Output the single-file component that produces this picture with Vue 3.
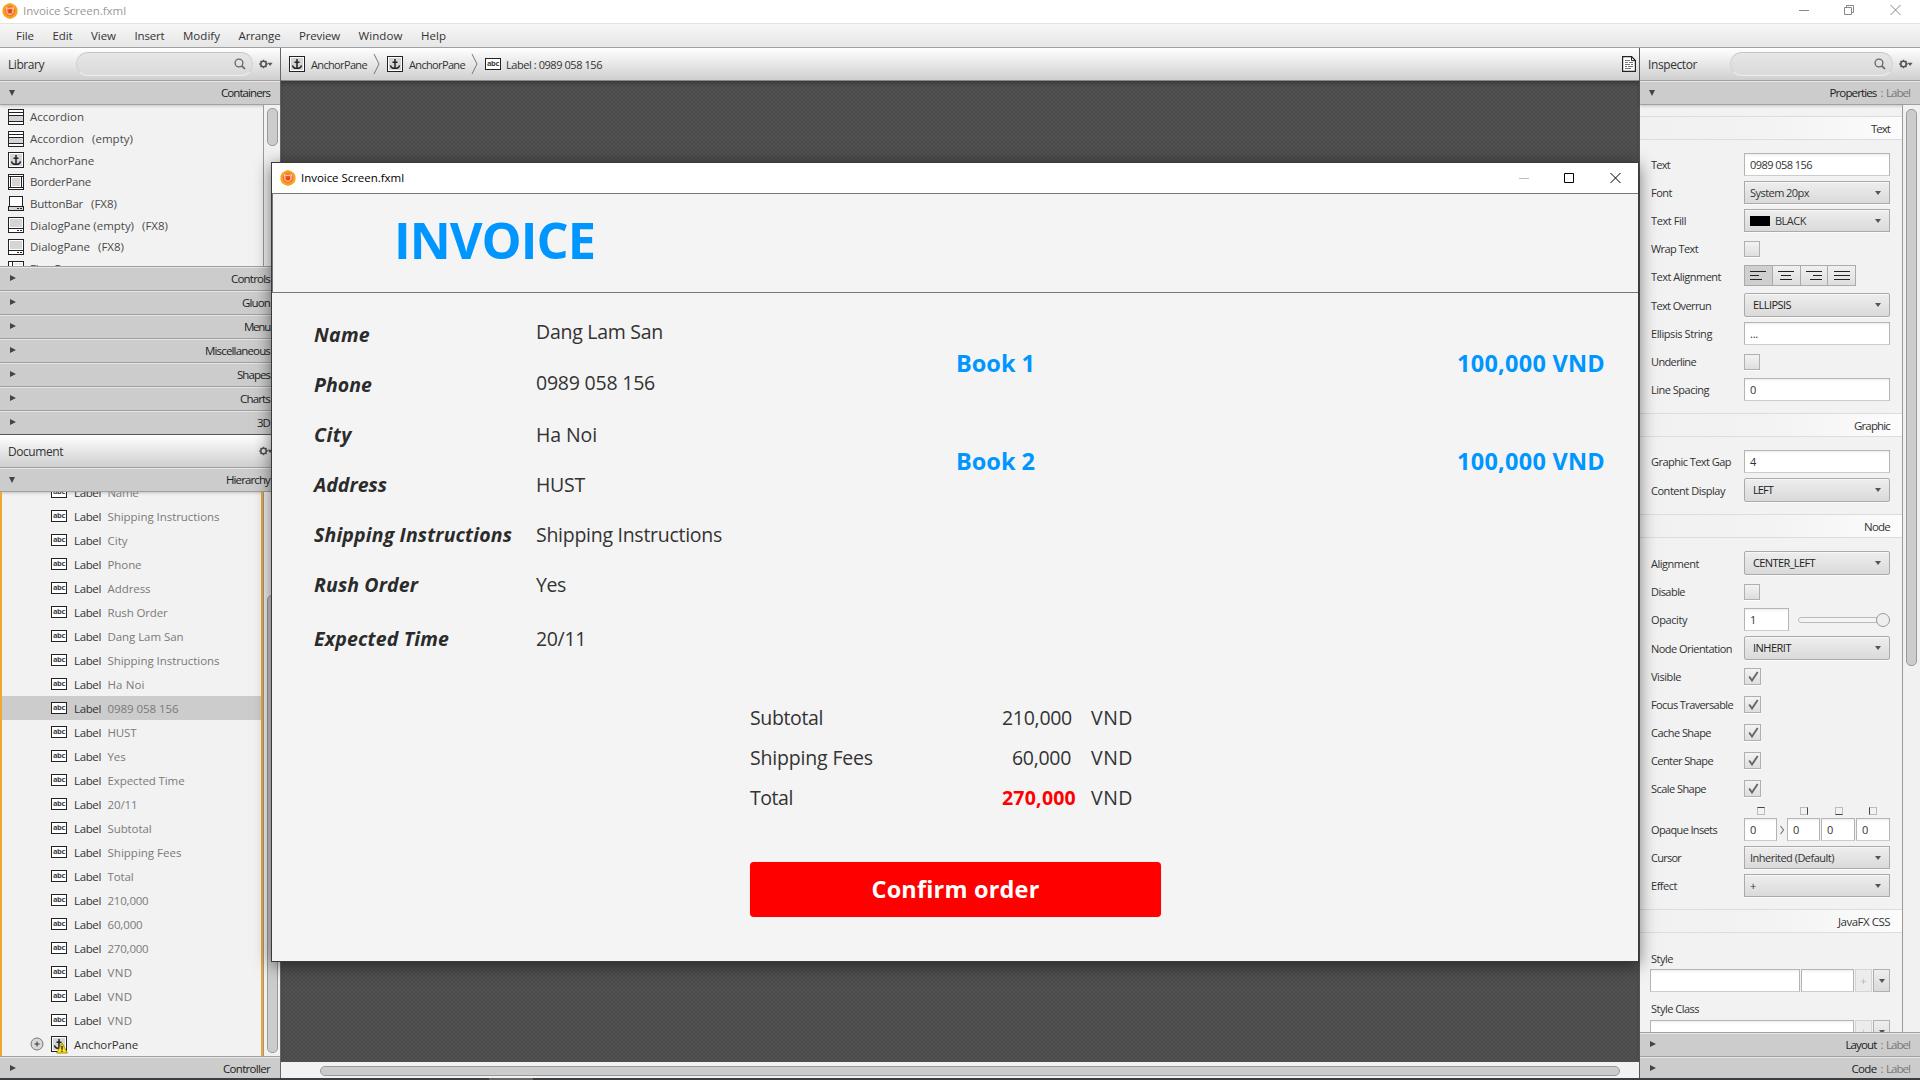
<script setup>
import { h } from 'vue'

// Tightens or loosens the tracking so that a label takes the given width.
const vFit = {
  mounted(el, { value }) {
    if (!value) return
    const natural = el.getBoundingClientRect().width
    el.style.letterSpacing = `${(value - natural) / el.textContent.length}px`
  },
}

const line = '#222'
const glyphs = {
  accordion: [
    ['rect', { x: 0.5, y: 0.5, width: 15, height: 15, fill: '#fff', stroke: line }],
    ['rect', { x: 1, y: 7, width: 14, height: 5, fill: '#d5d5d5' }],
    ['path', { d: 'M1 3.5h14M1 6.5h14M1 12.5h14', stroke: line }],
  ],
  anchor: [
    ['rect', { x: 0.5, y: 0.5, width: 15, height: 15, fill: '#fff', stroke: line }],
    ['rect', { x: 2, y: 2, width: 12, height: 12, fill: '#d5d5d5' }],
    ['path', { d: 'M8 3v9M5.5 6.2h5M3.5 9.3c.3 2 2 3 4.5 3s4.2-1 4.5-3', fill: 'none', stroke: line, 'stroke-width': 1.5 }],
  ],
  border: [
    ['rect', { x: 0.5, y: 0.5, width: 15, height: 15, fill: '#fff', stroke: line }],
    ['path', { d: 'M0 2.5h16M0 13.5h16M2.5 3v10M13.5 3v10', stroke: line }],
    ['rect', { x: 4, y: 4, width: 8, height: 8, fill: '#d5d5d5' }],
  ],
  buttonbar: [
    ['rect', { x: 1.5, y: 0.5, width: 13, height: 11, fill: '#fff', stroke: line }],
    ['rect', { x: 0.5, y: 10.5, width: 15, height: 4, fill: '#d5d5d5', stroke: line }],
    ['path', { d: 'M9 12.5h2M12 12.5h2', stroke: line }],
  ],
  dialog: [
    ['rect', { x: 0.5, y: 0.5, width: 15, height: 15, fill: '#fff', stroke: line }],
    ['rect', { x: 2, y: 2, width: 12, height: 8, fill: '#d5d5d5' }],
    ['path', { d: 'M0 11.5h16', stroke: line }],
    ['path', { d: 'M9 13.5h2M12 13.5h2', stroke: line }],
  ],
  flow: [
    ['rect', { x: 0.5, y: 0.5, width: 15, height: 15, fill: '#fff', stroke: line }],
    ['path', { d: 'M0 5.5h16M4.5 0v6M11.5 6v10', stroke: line }],
    ['path', { d: 'M6 3h8', stroke: '#d5d5d5' }],
  ],
}

const Glyph = ({ name }) =>
  h('svg', { width: 16, height: 16, viewBox: '0 0 16 16' }, glyphs[name].map(([tag, attrs]) => h(tag, attrs)))

const AppLogo = () =>
  h('svg', { width: 16, height: 16, viewBox: '0 0 16 16' }, [
    h('path', { d: 'M8 0l3 1 3 2 1.5 3v4l-1.5 3-3 2-3 1-3-1-3-2L.5 10V6L2 3l3-2z', fill: '#f9a51c' }),
    h('circle', { cx: 8, cy: 8, r: 5.4, fill: '#f4792b' }),
    h('path', { d: 'M4.3 4.7l2.3.8c1-.5 2-.5 2.800-.1l2.300-.6-.9 2.200c.7 2.400-.5 4.200-2.800 4.300-2.500 0-3.800-1.900-3-4.300z', fill: '#f25a24', stroke: '#ffe9dc', 'stroke-width': 0.9 }),
    h('circle', { cx: 8.2, cy: 8.3, r: 1.5, fill: '#e8401c' }),
  ])

const AbcIcon = () => h('span', { class: 'abc' }, 'abc')

const Gear = () =>
  h('svg', { width: 14, height: 10, viewBox: '0 0 14 10' }, [
    h('circle', { cx: 4.5, cy: 5, r: 2.7, fill: 'none', stroke: '#555', 'stroke-width': 1.6 }),
    h('path', {
      d: 'M4.5.7v1.600M4.500 7.700v1.600M.2 5h1.600M7.200 5h1.600M1.500 2l1.100 1.100M6.400 6.900L7.500 8M7.500 2L6.400 3.100M2.600 6.900L1.500 8',
      stroke: '#555', 'stroke-width': 1.4,
    }),
    h('path', { d: 'M8.600 3.700h5L11.100 7z', fill: '#555' }),
  ])

const Lens = () =>
  h('svg', { width: 12, height: 12, viewBox: '0 0 12 12' }, [
    h('circle', { cx: 5, cy: 5, r: 3.9, fill: 'none', stroke: '#666', 'stroke-width': 1.3 }),
    h('path', { d: 'M7.800 7.800L11 11', stroke: '#666', 'stroke-width': 1.7 }),
  ])

const menus = [['File', 18], ['Edit', 20], ['View', 25], ['Insert', 30], ['Modify', 37], ['Arrange', 42], ['Preview', 41], ['Window', 44], ['Help', 25]]

const containers = [
  { icon: 'accordion', name: 'Accordion', w: 54 },
  { icon: 'accordion', name: 'Accordion', w: 54, note: '(empty)', nw: 41 },
  { icon: 'anchor', name: 'AnchorPane', w: 64 },
  { icon: 'border', name: 'BorderPane', w: 61 },
  { icon: 'buttonbar', name: 'ButtonBar', w: 53, note: '(FX8)', nw: 26 },
  { icon: 'dialog', name: 'DialogPane (empty)', w: 104, note: '(FX8)', nw: 26 },
  { icon: 'dialog', name: 'DialogPane', w: 60, note: '(FX8)', nw: 26 },
  { icon: 'flow', name: 'FlowPane', w: 51 },
]

const groups = [['Controls', 39], ['Gluon', 28], ['Menu', 26], ['Miscellaneous', 65], ['Shapes', 33], ['Charts', 30], ['3D', 13]]

const nodes = [
  ['Name', 31], ['Shipping Instructions', 112], ['City', 20], ['Phone', 34], ['Address', 43], ['Rush Order', 60],
  ['Dang Lam San', 76], ['Shipping Instructions', 112], ['Ha Noi', 37], ['0989 058 156', 71], ['HUST', 29], ['Yes', 18],
  ['Expected Time', 77], ['20/11', 30], ['Subtotal', 44], ['Shipping Fees', 74], ['Total', 26], ['210,000', 41],
  ['60,000', 35], ['270,000', 41], ['VND', 25], ['VND', 25], ['VND', 25],
]
const selected = 9

const sections = [
  {
    title: 'Text', tw: 19,
    rows: [
      { label: 'Text', w: 19, type: 'field', value: '0989 058 156', vw: 62 },
      { label: 'Font', w: 21, type: 'menu', value: 'System 20px', vw: 59 },
      { label: 'Text Fill', w: 35, type: 'menu', value: 'BLACK', vw: 31, swatch: true },
      { label: 'Wrap Text', w: 47, type: 'check' },
      { label: 'Text Alignment', w: 70, type: 'align' },
      { label: 'Text Overrun', w: 60, type: 'combo', value: 'ELLIPSIS', vw: 38 },
      { label: 'Ellipsis String', w: 61, type: 'field', value: '...', vw: 8 },
      { label: 'Underline', w: 45, type: 'check' },
      { label: 'Line Spacing', w: 58, type: 'field', value: '0' },
    ],
  },
  {
    title: 'Graphic', tw: 36,
    rows: [
      { label: 'Graphic Text Gap', w: 80, type: 'field', value: '4' },
      { label: 'Content Display', w: 74, type: 'combo', value: 'LEFT', vw: 20 },
    ],
  },
  {
    title: 'Node', tw: 26,
    rows: [
      { label: 'Alignment', w: 48, type: 'combo', value: 'CENTER_LEFT', vw: 62 },
      { label: 'Disable', w: 34, type: 'check' },
      { label: 'Opacity', w: 36, type: 'slider' },
      { label: 'Node Orientation', w: 81, type: 'combo', value: 'INHERIT', vw: 38 },
      { label: 'Visible', w: 30, type: 'check', on: true },
      { label: 'Focus Traversable', w: 82, type: 'check', on: true },
      { label: 'Cache Shape', w: 60, type: 'check', on: true },
      { label: 'Center Shape', w: 62, type: 'check', on: true },
      { label: 'Scale Shape', w: 55, type: 'check', on: true },
      { label: 'Opaque Insets', w: 66, type: 'insets' },
      { label: 'Cursor', w: 30, type: 'menu', value: 'Inherited (Default)', vw: 84 },
      { label: 'Effect', w: 26, type: 'menu', value: '+' },
    ],
  },
]

const alignments = [
  'M0 .5h16M0 4.5h9M0 8.5h12',
  'M0 .5h16M3 4.5h10M2 8.5h12',
  'M0 .5h16M7 4.5h9M4 8.5h12',
  'M0 .5h16M0 4.5h16M0 8.5h16',
]

const details = [
  ['Name', 56, 'Dang Lam San', 127], ['Phone', 58, '0989 058 156', 119], ['City', 38, 'Ha Noi', 61],
  ['Address', 73, 'HUST', 49], ['Shipping Instructions', 198, 'Shipping Instructions', 186],
  ['Rush Order', 104, 'Yes', 30], ['Expected Time', 135, '20/11', 50],
]
const totals = [['Subtotal', 73, '210,000', 70], ['Shipping Fees', 123, '60,000', 59], ['Total', 43, '270,000', 74]]
</script>

<template>
  <div class="desktop">
    <header class="titlebar">
      <AppLogo /><span v-fit="103">Invoice Screen.fxml</span>
      <svg class="controls" width="110" height="12" viewBox="0 0 110 12" fill="none" stroke="#888">
        <path d="M0 6.5h10M45.5 3.5h7v7h-7zM47.5 3V1.5h7v7H53M91.5 1l10 10M101.5 1l-10 10" />
      </svg>
    </header>
    <nav class="menubar">
      <span v-for="[name, w] in menus" :key="name" v-fit="w">{{ name }}</span>
    </nav>

    <main class="workspace">
      <aside class="side left">
        <div class="panel-head">
          <span v-fit="36" class="panel-title">Library</span>
          <div class="search lib"><Lens /></div>
          <Gear class="gear" />
        </div>
        <div class="group open"><i class="tri down"></i><span v-fit="49">Containers</span></div>
        <div class="library">
          <ul class="lib-list">
            <li v-for="(c, i) in containers" :key="i">
              <Glyph :name="c.icon" /><span v-fit="c.w">{{ c.name }}</span><span v-if="c.note" v-fit="c.nw" class="note">{{ c.note }}</span>
            </li>
          </ul>
          <div class="track"><div class="thumb lib-thumb"></div></div>
        </div>
        <div v-for="[name, w] in groups" :key="name" class="group"><i class="tri"></i><span v-fit="w">{{ name }}</span></div>
        <div class="panel-head doc">
          <span v-fit="55" class="panel-title">Document</span>
          <Gear class="gear" />
        </div>
        <div class="group open"><i class="tri down"></i><span v-fit="44">Hierarchy</span></div>
        <div class="hierarchy">
          <ul class="tree">
            <li v-for="([name, w], i) in nodes" :key="i" :class="{ selected: i === selected }">
              <AbcIcon /><span v-fit="27" class="kind">Label</span><span v-fit="w" class="text">{{ name }}</span>
            </li>
            <li class="parent">
              <svg class="plus" width="14" height="14" viewBox="0 0 14 14"><circle cx="7" cy="7" r="6" fill="#d9d9d9" stroke="#777" /><path d="M4.500 7h5M7 4.500v5" stroke="#333" /></svg>
              <span class="warned">
                <Glyph name="anchor" />
                <svg class="warn" width="12" height="12" viewBox="0 0 12 12"><path d="M6 1l5.300 10H.7z" fill="#ffe11a" stroke="#a89000" stroke-linejoin="round" /><path d="M6 4v3.800M6 8.700v1.300" stroke="#222" stroke-width="1.400" /></svg>
              </span>
              <span v-fit="64" class="kind">AnchorPane</span>
            </li>
          </ul>
          <div class="track"><div class="thumb tree-thumb"></div></div>
        </div>
        <div class="group last"><i class="tri"></i><span v-fit="47">Controller</span></div>
      </aside>

      <section class="center">
        <div class="crumbs">
          <Glyph name="anchor" /><span v-fit="56">AnchorPane</span>
          <svg class="sep" width="8" height="22" viewBox="0 0 8 22"><path d="M1 1l5 10-5 10" fill="none" stroke="#777" /></svg>
          <Glyph name="anchor" /><span v-fit="56">AnchorPane</span>
          <svg class="sep" width="8" height="22" viewBox="0 0 8 22"><path d="M1 1l5 10-5 10" fill="none" stroke="#777" /></svg>
          <AbcIcon /><span v-fit="96">Label : 0989 058 156</span>
          <svg class="sheet" width="14" height="16" viewBox="0 0 14 16">
            <path d="M.6.6h9L13.400 4.500v10.900H.6z" fill="#fff" stroke="#222" stroke-width="1.200" /><path d="M9.500.6v4h4" fill="none" stroke="#222" />
            <path d="M3 4.500h5M3 6.500h3M7 6.500h4M3 8.500h5M9 8.500h2M3 10.500h2M6 10.500h5M3 12.500h6" stroke="#777" />
          </svg>
        </div>
        <div class="canvas"></div>
        <div class="hscroll"><div class="hthumb"></div></div>
      </section>

      <aside class="side right">
        <div class="panel-head">
          <span v-fit="49" class="panel-title">Inspector</span>
          <div class="search insp"><Lens /></div>
          <Gear class="gear" />
        </div>
        <div class="group open"><i class="tri down"></i><span v-fit="47">Properties</span><em>:</em><em v-fit="24">Label</em></div>
        <div class="inspector">
          <div class="props">
            <template v-for="s in sections" :key="s.title">
              <h3><span v-fit="s.tw">{{ s.title }}</span></h3>
              <div v-for="r in s.rows" :key="r.label" class="row" :class="`row-${r.type}`">
                <label><span v-fit="r.w">{{ r.label }}</span></label>
                <div v-if="r.type === 'field'" class="field"><span v-fit="r.vw">{{ r.value }}</span></div>
                <div v-else-if="r.type === 'menu' || r.type === 'combo'" class="button">
                  <i v-if="r.swatch" class="swatch"></i><span v-fit="r.vw">{{ r.value }}</span><i class="arrow"></i>
                </div>
                <div v-else-if="r.type === 'check'" class="box" :class="{ on: r.on }">
                  <svg v-if="r.on" width="11" height="11" viewBox="0 0 11 11"><path d="M1.200 5.500l2.800 4L9.700 1" fill="none" stroke="#666" stroke-width="1.900" /></svg>
                </div>
                <div v-else-if="r.type === 'align'" class="segments">
                  <span v-for="(d, i) in alignments" :key="i" :class="{ pressed: i === 0 }"><svg width="16" height="9" viewBox="0 0 16 9"><path :d="d" stroke="#222" /></svg></span>
                </div>
                <template v-else-if="r.type === 'slider'">
                  <div class="field short">1</div>
                  <div class="slider"><div class="knob"></div></div>
                </template>
                <div v-else class="inset-fields">
                  <div><i class="side-mark top"></i><div class="field">0</div></div>
                  <svg width="10" height="23" viewBox="0 0 10 23"><path d="M3.500 8l3 4-3 4" fill="none" stroke="#777" stroke-width="1.200" /></svg>
                  <div><i class="side-mark rgt"></i><div class="field">0</div></div>
                  <div class="wide"><i class="side-mark btm"></i><div class="field">0</div></div>
                  <div class="wide"><i class="side-mark lft"></i><div class="field">0</div></div>
                </div>
              </div>
            </template>
            <h3><span v-fit="52">JavaFX CSS</span></h3>
            <div class="css-label"><span v-fit="22">Style</span></div>
            <div class="css-row"><div class="field name"></div><div class="field value"></div><div class="mini off">+</div><div class="mini"><i class="arrow"></i></div></div>
            <div class="css-label second"><span v-fit="48">Style Class</span></div>
            <div class="css-row"><div class="field class-name"></div><div class="mini off">+</div><div class="mini"><i class="arrow"></i></div></div>
          </div>
          <div class="track"><div class="thumb insp-thumb"></div></div>
        </div>
        <div class="group"><i class="tri"></i><span v-fit="31">Layout</span><em>:</em><em v-fit="24">Label</em></div>
        <div class="group last"><i class="tri"></i><span v-fit="25">Code</span><em>:</em><em v-fit="24">Label</em></div>
      </aside>
    </main>
    <footer class="taskbar"><div class="task"></div></footer>

    <div class="window">
      <div class="window-bar">
        <AppLogo /><span v-fit="103">Invoice Screen.fxml</span>
        <svg class="controls" width="110" height="12" viewBox="0 0 110 12" fill="none" stroke="#000">
          <path d="M0 6.500h10" stroke="#bbb" /><path d="M45.500 1.500h9v9h-9z" /><path d="M91.500 1l10 10M101.500 1l-10 10" />
        </svg>
      </div>
      <div class="banner"><h1 v-fit="201">INVOICE</h1></div>
      <div class="invoice">
        <div class="order">
          <dl class="details">
            <div v-for="[name, w, value, vw] in details" :key="name">
              <dt><span v-fit="w">{{ name }}</span></dt><dd><span v-fit="vw">{{ value }}</span></dd>
            </div>
          </dl>
          <div class="books">
            <div><span v-fit="79">Book 1</span><span v-fit="148">100,000 VND</span></div>
            <div><span v-fit="79">Book 2</span><span v-fit="148">100,000 VND</span></div>
          </div>
        </div>
        <div class="totals">
          <div v-for="[name, w, amount, aw] in totals" :key="name">
            <span class="what"><span v-fit="w">{{ name }}</span></span><span class="amount"><span v-fit="aw">{{ amount }}</span></span><span v-fit="42">VND</span>
          </div>
        </div>
        <button><span v-fit="168">Confirm order</span></button>
      </div>
    </div>
  </div>
</template>

<style>
body { overflow: hidden; }
.abc {
  box-sizing: border-box; width: 16px; height: 12px; border: 1px solid #222; background: #fff; color: #444;
  font: bold 7.500px/9px "Noto Sans", sans-serif; text-align: center; letter-spacing: -0.3px; flex: none;
}
svg { display: block; flex: none; }
</style>

<style scoped>
* { box-sizing: border-box; }
.desktop {
  position: relative; width: 1920px; height: 1080px; overflow: hidden; display: flex; flex-direction: column;
  font: 11.500px/24px "Open Sans", "Noto Sans", sans-serif; color: #333; white-space: nowrap;
}
ul, dl, dd, h1, h3 { margin: 0; padding: 0; list-style: none; font-weight: normal; }
span { display: inline-block; }

.titlebar { height: 24px; flex: none; display: flex; align-items: center; gap: 5px; padding: 0 17px 2px 2px; background: #fff; border-bottom: 1px solid #e4e4e4; color: #999; }
.titlebar .controls { margin: 0 -6px 2px auto; }
.titlebar > span { line-height: 22px; padding-top: 1px; }
.menubar { height: 24px; flex: none; display: flex; gap: 18.500px; padding-left: 16px; line-height: 24px; background: linear-gradient(#f7f7f7, #e6e6e6); border-bottom: 1px solid #a0a0a0; }
.workspace { height: 1030px; flex: none; display: flex; }
.taskbar { height: 2px; background: #3c3d3f; display: flex; }
.task { width: 44px; margin-left: 489px; background: #666; }

.side { width: 280px; display: flex; flex-direction: column; background: #f2f2f2; }
.left { width: 281px; border-right: 1px solid #666; }
.panel-head { position: relative; height: 33px; flex: none; display: flex; align-items: center; padding: 0 8px; background: linear-gradient(#fff, #cfcfcf); border-bottom: 1px solid #a0a0a0; }
.doc { border-top: 1px solid #555; height: 34px; }
.panel-title { font-size: 12px; line-height: 32px; padding-top: 2px; }
.search { height: 24px; border: 1.500px solid #d2d2d2; border-radius: 12px; display: flex; align-items: center; justify-content: flex-end; padding: 0 6px 1px 0; background: linear-gradient(#e6e6e6, #dadada); border-top-color: #c6c6c6; border-bottom-color: #efefef; }
.lib { width: 177px; margin-left: 32px; }
.insp { width: 163px; margin-left: 33px; }
.gear { margin-left: auto; margin-right: -1px; }
.group { height: 24px; flex: none; display: flex; align-items: center; padding: 0 10px 0 9px; background: #ccc; border-top: 1px solid #a0a0a0; box-shadow: inset 0 1px #e6e6e6; line-height: 24px; }
.group.open { border-top: 0; border-bottom: 1px solid #a0a0a0; box-shadow: inset 0 1px #e6e6e6, 0 1px 3px #0003; }
.group.last { height: 22px; line-height: 22px; }
.group.last span, .group.last em { padding-top: 2px; }
.group span { margin-left: auto; color: #222; }
.group em { font-style: normal; color: #777; margin-left: 4px; }
.group em + em { margin-left: 2.500px; }
.tri { border: solid transparent; border-width: 3.500px 0 3.500px 6px; border-left-color: #444; margin: -2px 0 0 1px; }
.group.last .tri { margin-top: 0; }
.tri.down { border-width: 6px 3.500px 0; border-color: #444 transparent transparent; margin: 0; }

.library { height: 161px; flex: none; display: flex; overflow: hidden; }
.lib-list { flex: 1; padding-top: 1px; }
.lib-list li { height: 21.700px; display: flex; align-items: center; padding-left: 8px; color: #4a4a4a; }
.lib-list span { margin-left: 6px; line-height: 22px; padding-top: 1px; }
.lib-list .note { margin-left: 8px; }
.track { width: 17px; flex: none; border-left: 1px solid #999; background: #f1f1f1; padding: 3px 2px 0 3px; }
.thumb { width: 11px; border: 1px solid #999; border-radius: 5px; background: #ccc; }
.lib-thumb { height: 38px; }
.hierarchy { height: 564px; flex: none; display: flex; overflow: hidden; }
.tree { flex: 1; border: solid #efa72f; border-width: 0 2px; display: flex; flex-direction: column; justify-content: flex-end; }
.tree li { height: 24px; flex: none; display: flex; align-items: center; padding-left: 49px; color: #7a7a7a; }
.tree li.selected { background: #ccc; }
.tree .kind, .tree .text { line-height: 22px; padding-top: 2px; }
.tree .kind { color: #333; margin: 0 6.500px 0 7px; }
.tree li.parent { padding-left: 28px; }
.tree .plus { margin: 0 7px 0 0; }
.warned { position: relative; }
.warn { position: absolute; right: -1px; bottom: -2px; }
.tree-thumb { margin-top: 100px; height: 458px; }

.center { width: 1358px; display: flex; flex-direction: column; }
.crumbs { height: 33px; flex: none; display: flex; align-items: center; padding: 0 3px 0 8px; background: linear-gradient(#fff, #cfcfcf); border-bottom: 1px solid #888; font-size: 11px; line-height: 33px; }
.crumbs span { margin-left: 6px; }
.crumbs .sep { margin: 0 6px 0 6px; }
.crumbs span.abc { margin-left: 0; }
.crumbs span.abc + span { margin-left: 5px; }
.sheet { margin-left: auto; }
.canvas { flex: 1; box-shadow: inset 0 4px 5px -2px #0005; background: repeating-conic-gradient(#525252 0 25%, #4b4b4b 0 50%) 0 0 / 4px 4px; }
.hscroll { height: 16px; background: #f2f2f2; padding: 4px 19px 0 39px; }
.hthumb { height: 10px; border: 1px solid #999; border-radius: 5px; background: #ccc; }

.right { width: 281px; border-left: 1px solid #555; }
.inspector { height: 927px; display: flex; overflow: hidden; font-size: 11px; }
.props { width: 262px; height: 927px; overflow: hidden; }
.inspector .track { width: 18px; padding-top: 4px; }
.insp-thumb { height: 557px; }
h3 { height: 24px; margin: 9px 0 11px; border: solid #dcdcdc; border-width: 1px 0; background: linear-gradient(90deg, #f1f1f1, #f3f3f3 50%, #fcfcfc); text-align: right; padding-right: 12px; font-size: 11.500px; line-height: 23px; }
h3:first-child { margin-top: 11px; }
.row { height: 28px; display: flex; padding: 2px 0 0 11px; }
.row-combo { height: 29px; }
.row label { width: 93px; line-height: 24px; flex: none; }
.row-combo label { padding-top: 1px; }
.field { width: 146px; height: 23px; border: 1px solid #b4b4b4; border-bottom-color: #ccc; background: linear-gradient(#f0f0f0, #fff 3px); line-height: 22px; padding-left: 5px; }
.button { width: 146px; height: 23px; border: 1px solid #aaa; background: linear-gradient(#eee, #dadada); box-shadow: inset 0 1px #f7f7f7, 0 1px #fafafa; display: flex; align-items: center; padding: 0 8px 0 5px; line-height: 23px; }
.row-combo .button { height: 24px; border-radius: 2px; padding-left: 8px; color: #222; line-height: 22px; }
.arrow { margin-left: auto; border: solid transparent; border-width: 4px 3.500px 0; border-top-color: #555; }
.swatch { width: 20px; height: 10px; background: #000; margin-right: 5px; }
.box { width: 16px; height: 16px; margin-top: 4px; border: 1px solid #b0b0b0; background: linear-gradient(#f3f3f3, #dedede); box-shadow: 0 1px #fff; }
.box.on { width: 17px; height: 17px; margin-top: 3px; padding: 2px 0 0 3px; }
.segments { display: flex; width: 112px; height: 21px; border: 1px solid #aaa; }
.segments span { flex: 1; display: flex; align-items: center; justify-content: center; background: linear-gradient(#f0f0f0, #dedede); border-right: 1px solid #aaa; }
.segments span:last-child { border: 0; }
.segments .pressed { background: #cfcfcf; }
.short { width: 45px; }
.slider { width: 91px; height: 6px; margin: 9px 0 0 9px; border: 1px solid #bbb; border-radius: 3px; background: #f4f4f4; }
.knob { width: 14px; height: 14px; border: 1px solid #999; border-radius: 50%; background: #eee; margin: -5px 0 0 77px; }
.row-insets { height: 41px; }
.row-insets label { padding-top: 13px; }
.inset-fields { display: flex; align-items: flex-end; height: 36px; }
.inset-fields > div { width: 33px; display: flex; flex-direction: column; align-items: center; gap: 3px; }
.inset-fields > .wide { width: 34px; margin-left: 1px; }
.inset-fields .field { width: 100%; }
.side-mark { width: 8px; height: 8px; border: 1px solid #bbb; }
.side-mark.top { border-top-color: #444; }
.side-mark.rgt { border-right-color: #444; margin-left: 1px; }
.side-mark.btm { border-bottom-color: #444; margin-left: 2px; }
.side-mark.lft { border-left-color: #444; }
.css-label { height: 25px; padding-left: 11px; line-height: 29px; }
.css-label.second { height: 28px; line-height: 34px; }
.css-row { display: flex; gap: 1px; padding-left: 10px; }
.css-row .name { width: 150px; }
.css-row .value { width: 53px; }
.css-row .class-name { width: 204px; }
.mini { width: 17px; height: 23px; border: 1px solid #b0b0b0; background: linear-gradient(#eee, #dadada); display: flex; align-items: center; justify-content: center; }
.mini .arrow { margin: 0; }
.mini.off { color: #b5b5b5; border-color: #d5d5d5; background: #ececec; }

.window { position: absolute; z-index: 2; left: 271px; top: 162px; width: 1368px; height: 800px; border: 1px solid #3a3a3a; background: #f4f4f4; box-shadow: 0 3px 16px #0008; display: flex; flex-direction: column; }
.window-bar { height: 31px; flex: none; display: flex; align-items: center; gap: 5px; padding: 0 0 1px 8px; background: #fff; border-bottom: 1px solid #777; color: #000; }
.window-bar .controls { margin: 0 9px 0 auto; }
.banner { height: 99px; flex: none; border: solid #777; border-width: 0 0 1px 1px; padding-left: 121px; }
h1 { display: inline-block; font-size: 50.500px; line-height: 92px; font-weight: bold; color: #0096ff; }
.invoice { flex: 1; display: flex; flex-direction: column; font-size: 19.500px; line-height: 28px; }
.order { height: 394px; display: flex; justify-content: space-between; padding: 28px 33px 0 42px; }
.details > div { display: flex; height: 50px; }
.details dt { width: 222px; font-weight: bold; font-style: italic; color: #2b2b2b; }
.details > div:nth-child(6) { height: 54px; }
.details > div:first-child dd { margin-top: -3px; }
.details > div:nth-child(2) dd { margin-top: -2px; }
.books { width: 649px; font-size: 23.500px; font-weight: bold; color: #0096ff; padding-top: 28px; }
.books div { display: flex; justify-content: space-between; height: 98px; }
.totals { padding-left: 478px; height: 175px; padding-top: 17px; }
.totals > div { display: flex; height: 40px; }
.what { width: 252px; }
.amount { width: 89px; }
.totals > div:nth-child(2) .amount { padding-left: 10px; }
.totals > div:last-child .amount { color: red; font-weight: bold; }
button { width: 411px; height: 55px; margin-left: 478px; border: 0; border-radius: 4px; background: red; color: #fff; font: bold 23.500px/52px "Open Sans", sans-serif; padding: 0 0 2px; box-shadow: 0 0 1px #f005; }
</style>
